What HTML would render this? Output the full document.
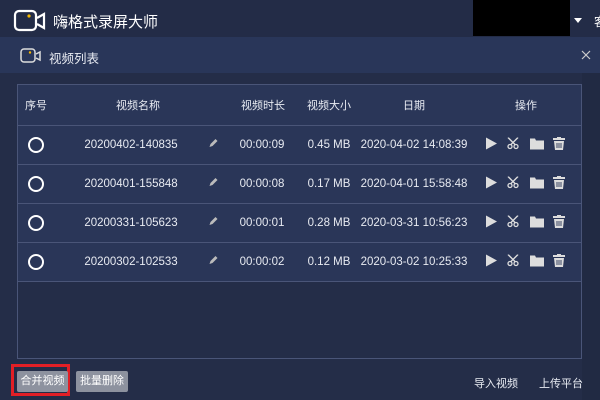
<!DOCTYPE html>
<html><head><meta charset="utf-8"><style>
*{margin:0;padding:0;box-sizing:border-box}
body{width:600px;height:400px;overflow:hidden;background:#242d48;font-family:"Liberation Sans","Noto Sans CJK SC",sans-serif;color:#e8ebf2;position:relative}
.abs{position:absolute}
.top{left:0;top:0;width:600px;height:37px;background:#232c47}
.sub{left:0;top:37px;width:600px;height:36px;background:#293659}
.tbl{left:17px;top:84px;width:565px;height:275px;border:1px solid #4a5578;background:#242d48}
.row{position:absolute;left:0;width:563px;height:39px;background:#2a3658;border-bottom:1px solid #4a5578;font-size:11.5px}
.row span{position:absolute;top:50%;transform:translate(-50%,-50%);white-space:nowrap}
.hd{height:41px;font-size:11px}
.btn{height:21px;background:#8d929f;color:#fff;font-size:11px;text-align:center;line-height:21px;border-radius:2px}
</style></head><body>
<div class="abs top"></div>
<svg class="abs" style="left:13px;top:9px" width="34" height="24" viewBox="0 0 34 24"><rect x="2" y="2" width="21" height="19" rx="4" fill="none" stroke="#fff" stroke-width="2.2"/><path d="M24 9l7-4v14l-7-4" fill="none" stroke="#fff" stroke-width="2.2"/><circle cx="16" cy="7" r="1.6" fill="#f5b800"/></svg>
<div class="abs" style="left:53px;top:11px;font-size:15px;color:#fff">嗨格式录屏大师</div>
<div class="abs" style="left:473px;top:0;width:97px;height:36px;background:#000"></div>
<div class="abs" style="left:574px;top:18px;width:0;height:0;border-left:4px solid transparent;border-right:4px solid transparent;border-top:5px solid #fff"></div>
<div class="abs" style="left:594px;top:13px;font-size:12px;color:#fff">客</div>
<div class="abs sub"></div>
<svg class="abs" style="left:20px;top:48px" width="22" height="16" viewBox="0 0 22 16"><rect x="1" y="1" width="14" height="13" rx="3" fill="none" stroke="#ddd" stroke-width="1.5"/><path d="M16 6l4-2v8l-4-2" fill="none" stroke="#ddd" stroke-width="1.5"/><circle cx="10" cy="4.5" r="1.2" fill="#f5b800"/></svg>
<div class="abs" style="left:49px;top:48px;font-size:12.5px">视频列表</div>
<svg class="abs" style="left:581px;top:50px" width="10" height="10"><path d="M1 1l8 8M9 1l-8 8" stroke="#ccc" stroke-width="1.2"/></svg>
<div class="abs" style="left:582px;top:73px;width:18px;height:327px;background:#212a43"></div>
<div class="abs tbl">
<div class="row hd" style="top:0"><span style="left:18px">序号</span><span style="left:120px">视频名称</span><span style="left:245px">视频时长</span><span style="left:311px">视频大小</span><span style="left:396px">日期</span><span style="left:508px">操作</span></div>
<div id="rows"></div>
</div>
<script>
var d=[["20200402-140835","00:00:09","0.45 MB","2020-04-02 14:08:39"],["20200401-155848","00:00:08","0.17 MB","2020-04-01 15:58:48"],["20200331-105623","00:00:01","0.28 MB","2020-03-31 10:56:23"],["20200302-102533","00:00:02","0.12 MB","2020-03-02 10:25:33"]];
var h="";d.forEach(function(r,i){h+='<div class="row" style="top:'+(41+i*39)+'px">'+
'<span style="left:18px;width:16px;height:16px;border:2px solid #fff;border-radius:50%"></span>'+
'<span style="left:113px">'+r[0]+'</span>'+
'<span style="left:195px"><svg width="9" height="9"><path d="M1 8l1-3 5-5 2 2-5 5z" fill="#bbb"/></svg></span>'+
'<span style="left:244px">'+r[1]+'</span><span style="left:311px">'+r[2]+'</span><span style="left:396px">'+r[3]+'</span>'+
'<span style="left:473px"><svg width="12" height="12"><path d="M1 0l11 6-11 6z" fill="#ddd"/></svg></span>'+
'<span style="left:495px"><svg width="12" height="12"><circle cx="3" cy="9" r="2" fill="none" stroke="#ddd" stroke-width="1.3"/><circle cx="9" cy="9" r="2" fill="none" stroke="#ddd" stroke-width="1.3"/><path d="M4 7l7-7M8 7l-7-7" stroke="#ddd" stroke-width="1.4"/></svg></span>'+
'<span style="left:519px"><svg width="14" height="12"><path d="M0 1h5l1 2h8v9h-14z" fill="#ddd"/></svg></span>'+
'<span style="left:541px"><svg width="12" height="13"><path d="M4 0h4v1h4v2h-12v-2h4z M1 4h10l-1 9h-8z" fill="#ddd"/><path d="M4 6v5M6 6v5M8 6v5" stroke="#2a3658" stroke-width="0.9"/></svg></span></div>'});
document.getElementById("rows").innerHTML=h;
</script>
<div class="abs" style="left:11px;top:364px;width:59px;height:32px;border:3px solid #e21f26"></div>
<div class="abs btn" style="left:17px;top:371px;width:51px">合并视频</div>
<div class="abs btn" style="left:76px;top:371px;width:52px">批量删除</div>
<div class="abs" style="left:474px;top:375px;font-size:11px">导入视频</div>
<div class="abs" style="left:539px;top:375px;font-size:11px">上传平台</div>
</body></html>
